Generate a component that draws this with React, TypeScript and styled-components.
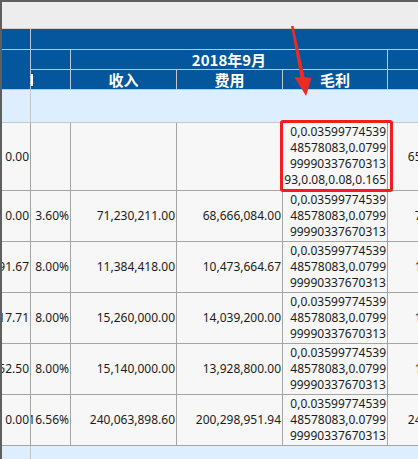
import React from "react";
import styled, { createGlobalStyle } from "styled-components";

const Global = createGlobalStyle`
  html, body { margin: 0; padding: 0; background: #ffffff; }
  body { font-family: "Noto Sans", "Noto Sans CJK SC", sans-serif; }
  * { box-sizing: border-box; }
`;

const COLS = "28px 39px 105px 105px 104px 106px";

const Frame = styled.div`
  position: relative;
  width: 418px;
  height: 459px;
  overflow: hidden;
  border-top: 2px solid #5f5f5f;
  border-left: 2px solid #5f5f5f;
  background: #ddeeff;
`;

const TopBar = styled.div`
  height: 27px;
  background: #ededed;
  border-bottom: 1px solid #cfcfcf;
`;

const HeadGrid = styled.div`
  display: grid;
  grid-template-columns: ${COLS};
  grid-template-rows: 20px 19px 19px 32px;
  gap: 1px;
  width: max-content;
  background: #c6c6c6;
  padding-bottom: 1px;
`;

const HeadCell = styled.div<{ $col: string; $row: string }>`
  grid-column: ${(p) => p.$col};
  grid-row: ${(p) => p.$row};
  background: #05579d;
  color: #ffffff;
  font-family: "Noto Sans CJK SC", "Noto Sans", sans-serif;
  font-weight: 700;
  font-size: 15px;
  line-height: 19px;
  display: flex;
  align-items: center;
  justify-content: center;
  overflow: hidden;
  white-space: nowrap;
  position: relative;
`;

const ClipMark = styled.span`
  position: absolute;
  left: 0;
  top: 4px;
  width: 2px;
  height: 12px;
  background: #ffffff;
`;

const BandCell = styled.div<{ $col: string }>`
  grid-column: ${(p) => p.$col};
  background: #ddeeff;
`;

const BodyGrid = styled.div`
  display: grid;
  grid-template-columns: ${COLS};
  grid-template-rows: 67px repeat(5, 50px);
  gap: 1px;
  width: max-content;
  background: #a4a4a4;
  padding-bottom: 1px;
`;

const Cell = styled.div`
  background: #f7f7f7;
  color: #1c1c1c;
  font-size: 12px;
  line-height: 16px;
  display: flex;
  align-items: center;
  justify-content: flex-end;
  padding: 0 1px 0 0;
  white-space: nowrap;
  overflow: hidden;
`;

const RatioCell = styled(Cell)`
  flex-direction: column;
  align-items: flex-end;
  justify-content: flex-start;
  padding-top: 1px;
`;

const RatioLine = styled.span`
  display: block;
  text-align: right;
`;

const FootGrid = styled.div`
  display: grid;
  grid-template-columns: ${COLS};
  grid-template-rows: 20px;
  gap: 1px;
  width: max-content;
  background: #c6c6c6;
`;

const FootCell = styled.div<{ $col: string }>`
  grid-column: ${(p) => p.$col};
  background: #ddeeff;
`;

const Highlight = styled.div`
  position: absolute;
  left: 278px;
  top: 118px;
  width: 113px;
  height: 72px;
  border: 3px solid #f41d1d;
  border-radius: 3px;
`;

const ArrowSvg = styled.svg`
  position: absolute;
  left: 0;
  top: 0;
`;

const ratioLines = [
  "0,0.03599774539",
  "48578083,0.0799",
  "99990337670313",
  "93,0.08,0.08,0.165",
];

type Row = {
  a: string;
  rate: string;
  income: string;
  cost: string;
  next: string;
  lines: number;
};

const rows: Row[] = [
  { a: "0.00", rate: "", income: "", cost: "", next: "651,254,380.00", lines: 4 },
  { a: "0.00", rate: "3.60%", income: "71,230,211.00", cost: "68,666,084.00", next: "71,230,211.00", lines: 3 },
  { a: "1,391.67", rate: "8.00%", income: "11,384,418.00", cost: "10,473,664.67", next: "11,384,418.00", lines: 3 },
  { a: "1,217.71", rate: "8.00%", income: "15,260,000.00", cost: "14,039,200.00", next: "15,260,000.00", lines: 3 },
  { a: "1,152.50", rate: "8.00%", income: "15,140,000.00", cost: "13,928,800.00", next: "15,140,000.00", lines: 3 },
  { a: "0.00", rate: "16.56%", income: "240,063,898.60", cost: "200,298,951.94", next: "240,063,898.60", lines: 3 },
];

export default function App() {
  return (
    <>
      <Global />
      <Frame>
        <TopBar />
        <HeadGrid>
          <HeadCell $col="1" $row="1" />
          <HeadCell $col="2 / 7" $row="1" />
          <HeadCell $col="1" $row="2 / 4" />
          <HeadCell $col="2" $row="2" />
          <HeadCell $col="3 / 6" $row="2">2018年9月</HeadCell>
          <HeadCell $col="6" $row="2" />
          <HeadCell $col="2" $row="3">
            <ClipMark />
          </HeadCell>
          <HeadCell $col="3" $row="3">收入</HeadCell>
          <HeadCell $col="4" $row="3">费用</HeadCell>
          <HeadCell $col="5" $row="3">毛利</HeadCell>
          <HeadCell $col="6" $row="3" />
          <BandCell $col="1" />
          <BandCell $col="2 / 7" />
        </HeadGrid>
        <BodyGrid>
          {rows.map((r, i) => (
            <React.Fragment key={i}>
              <Cell>{r.a}</Cell>
              <Cell>{r.rate}</Cell>
              <Cell>{r.income}</Cell>
              <Cell>{r.cost}</Cell>
              <RatioCell>
                {ratioLines.slice(0, r.lines).map((l) => (
                  <RatioLine key={l}>{l}</RatioLine>
                ))}
              </RatioCell>
              <Cell>{r.next}</Cell>
            </React.Fragment>
          ))}
        </BodyGrid>
        <FootGrid>
          <FootCell $col="1" />
          <FootCell $col="2 / 7" />
        </FootGrid>
        <Highlight />
        <ArrowSvg width="418" height="459" viewBox="0 0 418 459">
          <polygon
            points="289,24 291.5,24 302.5,75 309.5,76 304,94 292.5,75 298.5,75.5"
            fill="#ee2a24"
          />
        </ArrowSvg>
      </Frame>
    </>
  );
}
